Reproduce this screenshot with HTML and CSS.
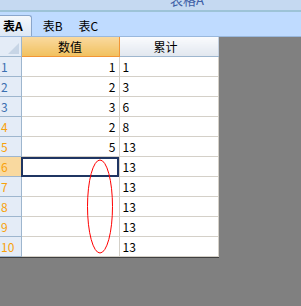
FILE: index.html
```html
<!DOCTYPE html>
<html>
<head>
    <meta charset="UTF-8">
    <title>表格</title>
    <link rel="stylesheet" href="styles.css">
</head>
<body>
    <div class="title"><span>表格A</span></div>
    <div class="tabs">
        <div class="tab active">表A</div>
        <div class="tab">表B</div>
        <div class="tab">表C</div>
    </div>
    <div class="sheet">
        <table class="grid">
            <colgroup>
                <col class="c0">
                <col class="c1">
                <col class="c2">
            </colgroup>
            <tr>
                <th class="corner"><span class="tri"></span></th>
                <th class="colhead sel">数值</th>
                <th class="colhead last">累计</th>
            </tr>
            <tr><td class="rh blue">1</td><td class="num">1</td><td>1</td></tr>
            <tr><td class="rh blue">2</td><td class="num">2</td><td>3</td></tr>
            <tr><td class="rh blue">3</td><td class="num">3</td><td>6</td></tr>
            <tr><td class="rh">4</td><td class="num">2</td><td>8</td></tr>
            <tr><td class="rh">5</td><td class="num">5</td><td>13</td></tr>
            <tr><td class="rh sel">6</td><td class="num cur"></td><td>13</td></tr>
            <tr><td class="rh">7</td><td class="num"></td><td>13</td></tr>
            <tr><td class="rh">8</td><td class="num"></td><td>13</td></tr>
            <tr><td class="rh">9</td><td class="num"></td><td>13</td></tr>
            <tr><td class="rh">10</td><td class="num"></td><td>13</td></tr>
        </table>
        <!-- 红色圈 -->
        <svg class="mark" width="30" height="98" viewBox="0 0 30 98">
            <ellipse cx="15" cy="48.5" rx="12.5" ry="46.5" fill="none" stroke="#f00" stroke-width="1"/>
        </svg>
    </div>
</body>
</html>
```

FILE: styles.css
```css
* {
    margin: 0;
    padding: 0;
}
body {
    background: #808080;
    font-family: "Noto Sans CJK SC", "DejaVu Sans", sans-serif;
    font-size: 12px;
    width: 301px;
    height: 306px;
    overflow: hidden;
}
.title {
    height: 10px;
    background: #c5d9f1;
    border-bottom: 2px solid #9dc3d7;
    overflow: hidden;
}
.title span {
    display: block;
    padding-left: 170px;
    margin-top: -9px;
    line-height: 18px;
    font-size: 13px;
    color: #3f5fa6;
}
.tabs {
    height: 24px;
    background: #bfdbff;
    border-bottom: 1px solid #99b8dd;
    display: flex;
    align-items: flex-end;
}
.tab {
    height: 20px;
    line-height: 20px;
    padding: 0 7px 0 9px;
    color: #000;
}
.tab.active {
    font-weight: 700;
    padding: 0 8px 0 3px;
    margin-right: 2px;
    background: linear-gradient(#f4f7fb, #dde8f5);
    border: 1px solid #8aa6cc;
    border-left: 0;
    border-bottom: 0;
    border-radius: 0 3px 0 0;
}
.sheet {
    position: relative;
    width: 218px;
    background: #fff;
    border-right: 1px solid #404040;
    border-bottom: 1px solid #404040;
}
.grid {
    width: 218px;
    border-collapse: collapse;
    table-layout: fixed;
}
.c0 { width: 21px; }
.c1 { width: 98px; }
.c2 { width: 99px; }
.grid th, .grid td {
    height: 19px;
    border: 1px solid #d4d0c8;
    padding: 0 3px;
    font-weight: 400;
    line-height: 19px;
    white-space: nowrap;
    overflow: hidden;
}
.grid tr:first-child th {
    border-top: 0;
}
.corner {
    background: #e4ecf7;
    border-left: 0 !important;
    border-right: 1px solid #9eb6ce !important;
    border-bottom: 1px solid #9eb6ce !important;
    position: relative;
}
.tri {
    position: absolute;
    right: 2px;
    bottom: 2px;
    width: 0;
    height: 0;
    border-left: 11px solid transparent;
    border-bottom: 11px solid #c7d5e6;
}
.colhead {
    background: linear-gradient(#fafbfd, #e1e7ef);
    border-color: #c5d0de !important;
    border-bottom: 1px solid #9eb6ce !important;
    text-align: center;
}
.colhead.last {
    text-align: left;
    padding-left: 34px;
}
.colhead.sel {
    background: linear-gradient(#f9d99f, #f1c15f);
    border: 1px solid #f29536 !important;
    border-top: 0 !important;
}
.rh {
    background: #e4ecf7;
    color: #f7a10a;
    border-left: 0 !important;
    border-color: #9eb6ce !important;
    text-align: left;
    padding-left: 1px !important;
}
.rh.blue {
    color: #3b6fb0;
}
.rh.sel {
    background: #f9d99f;
}
.num {
    text-align: right;
}
.grid td.cur {
    outline: 2px solid #1f3562;
    outline-offset: -2px;
}
.mark {
    position: absolute;
    left: 85px;
    top: 121px;
}
```
